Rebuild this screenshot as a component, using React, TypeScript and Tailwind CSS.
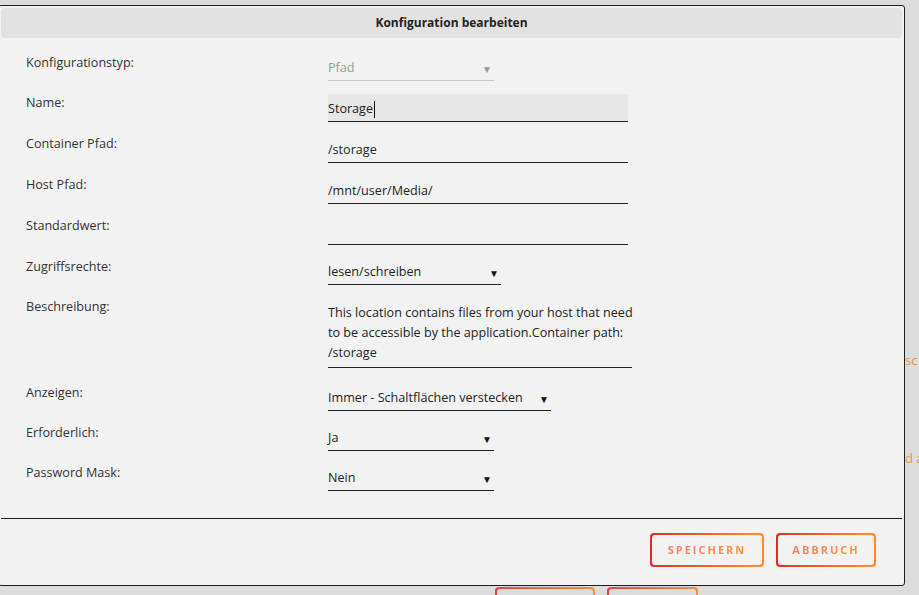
import React from "react";

const font = { fontFamily: '"Open Sans", "Noto Sans", sans-serif' };

function Arrow({ muted }: { muted?: boolean }) {
  return (
    <span className={`text-[10px] leading-none ${muted ? "text-[#9a9a9a]" : "text-[#111]"}`}>▼</span>
  );
}

function Select({ value, width, muted }: { value: string; width: string; muted?: boolean }) {
  return (
    <div
      className={`flex h-[27px] items-center justify-between border-b pr-[2px] pt-[3px] ${width} ${
        muted ? "border-[#c8c8c8] text-[#9a9a9a]" : "border-[#222] text-[#222]"
      }`}
    >
      <span>{value}</span>
      <Arrow muted={muted} />
    </div>
  );
}

function TextInput({ value, focused }: { value?: string; focused?: boolean }) {
  return (
    <div
      className={`flex h-[28px] w-[300px] items-center border-b border-[#222] pt-[3px] text-[#222] ${
        focused ? "bg-[#e6e6e6]" : ""
      }`}
    >
      <span>{value}</span>
      {focused && <span className="ml-px h-[17px] w-px bg-[#111]" />}
    </div>
  );
}

function Row({ label, children, className = "" }: { label: string; children: React.ReactNode; className?: string }) {
  return (
    <div className={`flex ${className}`}>
      <div className="w-[302px] pt-px leading-[16px] text-[#333]">{label}</div>
      {children}
    </div>
  );
}

function GradButton({ label, width }: { label: string; width: string }) {
  return (
    <div className={`rounded-[4px] bg-gradient-to-r from-[#e22828] to-[#ff8c2f] p-[2px] ${width} h-[34px]`}>
      <div className="flex h-full w-full items-center justify-center rounded-[3px] bg-[#f2f2f2]">
        <span className="bg-gradient-to-r from-[#f0806a] to-[#ff922e] bg-clip-text text-[11px] font-bold tracking-[2px] text-transparent">
          {label}
        </span>
      </div>
    </div>
  );
}

export default function App() {
  return (
    <div className="relative h-[595px] w-[919px] overflow-hidden bg-[#dcdcdc] text-[12.6px]" style={font}>
      {/* page behind the dialog */}
      <div className="absolute left-[905px] top-[351px] whitespace-nowrap text-[13px] text-[#e39a45]">sc</div>
      <div className="absolute left-[905px] top-[449px] whitespace-nowrap text-[13px] text-[#e39a45]">d a</div>
      <div className="absolute left-[495px] top-[587px] flex gap-[12px]">
        <div className="h-[20px] w-[100px] rounded-[4px] bg-gradient-to-r from-[#d84848] to-[#e8944a] p-[2px]">
          <div className="h-full w-full rounded-[3px] bg-[#dcdcdc]" />
        </div>
        <div className="h-[20px] w-[91px] rounded-[4px] bg-gradient-to-r from-[#d84848] to-[#e8944a] p-[2px]">
          <div className="h-full w-full rounded-[3px] bg-[#dcdcdc]" />
        </div>
      </div>

      {/* dialog */}
      <div className="absolute left-[-2px] top-[5px] flex h-[581px] w-[907px] flex-col rounded-[3px] border border-[#1e1e1e] bg-[#f2f2f2]">
        <div className="mx-[2px] mt-[2px] flex h-[30px] items-center justify-center rounded-[4px] bg-[#e2e2e2] text-[12px] font-bold text-[#222]">
          Konfiguration bearbeiten
        </div>

        <div className="flex flex-col pl-[27px] pt-[16px]">
          <Row label="Konfigurationstyp:" className="mb-[13px]">
            <Select value="Pfad" width="w-[166px]" muted />
          </Row>
          <Row label="Name:" className="mb-[13px]">
            <TextInput value="Storage" focused />
          </Row>
          <Row label="Container Pfad:" className="mb-[13px]">
            <TextInput value="/storage" />
          </Row>
          <Row label="Host Pfad:" className="mb-[13px]">
            <TextInput value="/mnt/user/Media/" />
          </Row>
          <Row label="Standardwert:" className="mb-[13px]">
            <TextInput />
          </Row>
          <Row label="Zugriffsrechte:" className="mb-[13px]">
            <Select value="lesen/schreiben" width="w-[173px]" />
          </Row>
          <Row label="Beschreibung:" className="mb-[16px]">
            <div className="w-[304px] whitespace-nowrap border-b border-[#222] pb-[4px] pt-[5px] leading-[20px] text-[#222]">
              This location contains files from your host that need
              <br />
              to be accessible by the application.Container path:
              <br />
              /storage
            </div>
          </Row>
          <Row label="Anzeigen:" className="mb-[13px]">
            <Select value="Immer - Schaltflächen verstecken" width="w-[223px]" />
          </Row>
          <Row label="Erforderlich:" className="mb-[13px]">
            <Select value="Ja" width="w-[166px]" />
          </Row>
          <Row label="Password Mask:">
            <Select value="Nein" width="w-[166px]" />
          </Row>
        </div>

        <div className="mx-[2px] mt-[27px] h-px bg-[#1e1e1e]" />

        <div className="flex justify-end gap-[12px] pr-[28px] pt-[14px]">
          <GradButton label="SPEICHERN" width="w-[114px]" />
          <GradButton label="ABBRUCH" width="w-[100px]" />
        </div>
      </div>
    </div>
  );
}
